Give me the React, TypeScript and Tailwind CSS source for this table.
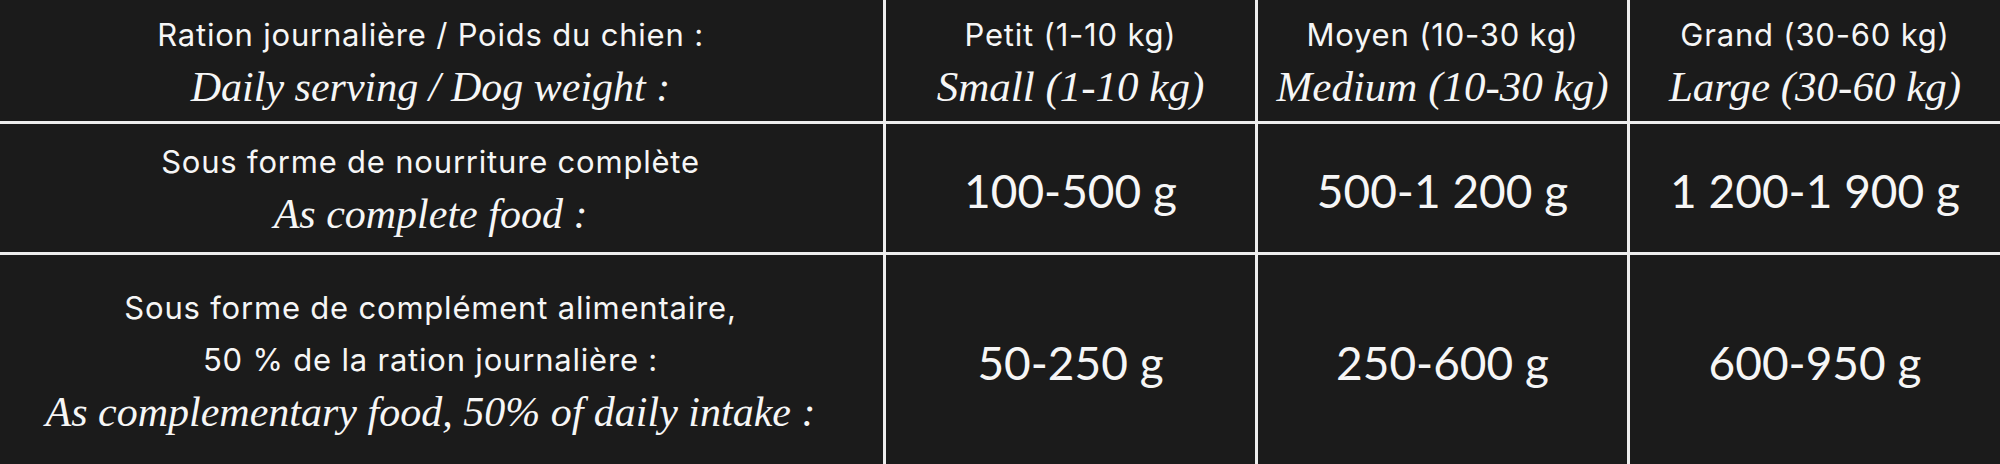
const sans = "font-['Inter','Lato',sans-serif] tracking-[0.8px]";
const num = "font-['Lato','Inter',sans-serif]";
const serif = "font-['Liberation_Serif','Times_New_Roman',serif] italic";

const sizes = [
  { fr: 'Petit (1-10 kg)', en: 'Small (1-10 kg)' },
  { fr: 'Moyen (10-30 kg)', en: 'Medium (10-30 kg)' },
  { fr: 'Grand (30-60 kg)', en: 'Large (30-60 kg)' },
];

const complete = ['100-500 g', '500-1 200 g', '1 200-1 900 g'];
const complement = ['50-250 g', '250-600 g', '600-950 g'];

const Cell = ({ children, first = false }: { children: React.ReactNode; first?: boolean }) => (
  <div
    className={`bg-[#1b1b1b] flex flex-col items-center justify-center text-center text-[#f6f6f6] ${
      first ? 'pr-[22px]' : ''
    }`}
  >
    {children}
  </div>
);

const Amount = ({ value }: { value: string }) => (
  <Cell>
    <span className={`${num} text-[46px] leading-none pt-[6px]`}>{value}</span>
  </Cell>
);

export default function App() {
  return (
    <div className="w-[2000px] h-[464px] bg-[#1b1b1b]">
      <div className="grid h-full grid-cols-[883px_369px_369px_1fr] grid-rows-[121px_128px_1fr] gap-[3px] bg-[#ededed]">
        {/* Header */}
        <Cell first>
          <p className={`${sans} text-[31px] leading-[52px]`}>Ration journalière / Poids du chien :</p>
          <p className={`${serif} text-[42px] leading-[52px]`}>Daily serving / Dog weight :</p>
        </Cell>
        {sizes.map((s) => (
          <Cell key={s.fr}>
            <p className={`${sans} text-[31px] leading-[52px]`}>{s.fr}</p>
            <p className={`${serif} text-[43px] leading-[52px]`}>{s.en}</p>
          </Cell>
        ))}

        {/* Complete food */}
        <Cell first>
          <p className={`${sans} text-[31px] leading-[52px]`}>Sous forme de nourriture complète</p>
          <p className={`${serif} text-[42px] leading-[52px]`}>As complete food :</p>
        </Cell>
        {complete.map((v) => (
          <Amount key={v} value={v} />
        ))}

        {/* Complementary food */}
        <Cell first>
          <p className={`${sans} text-[31px] leading-[52px]`}>Sous forme de complément alimentaire,</p>
          <p className={`${sans} text-[31px] leading-[52px]`}>50 % de la ration journalière :</p>
          <p className={`${serif} text-[42px] leading-[52px]`}>As complementary food, 50% of daily intake :</p>
        </Cell>
        {complement.map((v) => (
          <Amount key={v} value={v} />
        ))}
      </div>
    </div>
  );
}
